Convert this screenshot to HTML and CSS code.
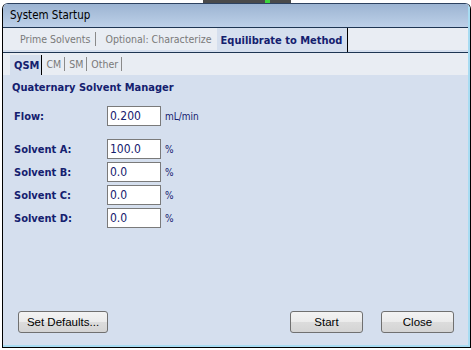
FILE: index.html
```html
<!DOCTYPE html>
<html lang="en">
<head>
    <meta charset="UTF-8">
    <title>System Startup</title>
    <link rel="stylesheet" href="styles.css">
</head>
<body>
    <div class="topstrip">
        <div class="topstrip__bar"><span class="topstrip__dot"></span></div>
    </div>
    <div class="window">
        <div class="window__inner">
            <div class="window__title">System Startup</div>

            <div class="tabs tabs--steps">
                <span class="tab tab--first">Prime Solvents</span>
                <span class="tabs__sep"></span>
                <span class="tab">Optional: Characterize</span>
                <span class="tab tab--active">Equilibrate to Method</span>
            </div>

            <div class="tabs tabs--modules">
                <span class="tab tab--active">QSM</span>
                <span class="tab">CM</span>
                <span class="tabs__sep"></span>
                <span class="tab">SM</span>
                <span class="tabs__sep"></span>
                <span class="tab">Other</span>
                <span class="tabs__sep"></span>
            </div>

            <div class="panel">
                <div class="panel__heading">Quaternary Solvent Manager</div>

                <div class="field field--flow">
                    <label class="field__label" for="flow">Flow:</label>
                    <input class="field__input" id="flow" type="text" value="0.200">
                    <span class="field__unit">mL/min</span>
                </div>

                <div class="field-group">
                    <div class="field">
                        <label class="field__label" for="solventA">Solvent A:</label>
                        <input class="field__input" id="solventA" type="text" value="100.0">
                        <span class="field__unit">%</span>
                    </div>
                    <div class="field">
                        <label class="field__label" for="solventB">Solvent B:</label>
                        <input class="field__input" id="solventB" type="text" value="0.0">
                        <span class="field__unit">%</span>
                    </div>
                    <div class="field">
                        <label class="field__label" for="solventC">Solvent C:</label>
                        <input class="field__input" id="solventC" type="text" value="0.0">
                        <span class="field__unit">%</span>
                    </div>
                    <div class="field">
                        <label class="field__label" for="solventD">Solvent D:</label>
                        <input class="field__input" id="solventD" type="text" value="0.0">
                        <span class="field__unit">%</span>
                    </div>
                </div>
            </div>

            <div class="footer">
                <button class="btn btn--defaults">Set Defaults...</button>
                <div class="footer__right">
                    <button class="btn">Start</button>
                    <button class="btn">Close</button>
                </div>
            </div>
        </div>
    </div>
</body>
</html>
```

FILE: styles.css
```css
/* Global */
html, body {
    margin: 0;
    padding: 0;
    background: #fff;
    font-family: 'DejaVu Sans Condensed', 'DejaVu Sans', sans-serif;
}

.topstrip {
    height: 3px;
}

.topstrip__bar {
    margin-left: 203px;
    width: 88px;
    height: 3px;
    background: #4a4a4a;
}

.topstrip__dot {
    display: block;
    margin-left: 62px;
    width: 5px;
    height: 3px;
    background: #3cd43c;
}

/* Window frame */
.window {
    margin-left: 2px;
    width: 469px;
    height: 345px;
    box-sizing: border-box;
    border: 1px solid #000;
    border-top-color: #2d4260;
    border-radius: 6px 6px 0 0;
    overflow: hidden;
}

.window__inner {
    height: 100%;
    box-sizing: border-box;
    border-right: 2px solid #a8dcf2;
    border-bottom: 2px solid #a8dcf2;
    background: #d5dfee;
    display: flex;
    flex-direction: column;
}

.window__title {
    height: 23px;
    line-height: 23px;
    padding-left: 7px;
    font-size: 11.5px;
    color: #000;
    background: linear-gradient(to bottom, #9cb4d2, #bdd0e8);
    border-bottom: 1px solid #1e3552;
}

/* Tab rows */
.tabs {
    display: flex;
    align-items: stretch;
    background: #e9edf3;
    font-size: 10.5px;
    color: #7a7a7a;
}

.tabs--steps {
    height: 22px;
    border-bottom: 2px solid #d5dfee;
    box-shadow: 0 1px 0 #1e3552;
    margin-bottom: 1px;
}

.tabs--modules {
    height: 22px;
    padding-left: 7px;
}

.tab {
    display: flex;
    align-items: center;
}

.tabs--steps .tab {
    padding: 0 5px;
}

.tabs--steps .tab--first {
    padding-left: 17px;
}

.tabs--modules .tab {
    padding: 0 3px 0 4px;
}

.tab--active {
    background: #d5dfee;
    color: #14206e;
    font-size: 11px;
    font-weight: bold;
    border-right: 1px solid #000;
}

.tabs--steps .tab--active {
    margin-bottom: -2px;
    padding: 0 5px 0 4px;
}

.tabs--modules .tab--active {
    margin-top: 2px;
    padding: 0 2px 0 4px;
}

.tabs__sep {
    width: 1px;
    margin: 4px 0;
    background: #8a8a8a;
}

.tabs--steps .tabs__sep {
    margin-right: 4px;
}

/* Panel */
.panel {
    flex: 1;
    padding: 5px 9px 0;
    color: #14206e;
}

.panel__heading {
    font-size: 11px;
    font-weight: bold;
    line-height: 16px;
    margin-bottom: 10px;
}

.field {
    display: flex;
    align-items: center;
    height: 20px;
    padding-left: 2px;
}

.field--flow {
    margin-bottom: 13px;
}

.field-group {
    display: flex;
    flex-direction: column;
    gap: 3px;
}

.field__label {
    width: 93px;
    font-size: 11px;
    font-weight: bold;
}

.field__input {
    width: 54px;
    height: 20px;
    box-sizing: border-box;
    border: 1px solid #7a7a7a;
    padding: 0 2px;
    margin: 0;
    font-family: 'DejaVu Sans Condensed', 'DejaVu Sans', sans-serif;
    font-size: 12px;
    color: #14206e;
    background: #fff;
    outline: none;
}

.field__unit {
    margin-left: 4px;
    font-size: 10px;
}

/* Footer buttons */
.footer {
    display: flex;
    justify-content: space-between;
    align-items: center;
    padding: 0 14px 12px 15px;
}

.footer__right {
    display: flex;
    gap: 18px;
}

.btn {
    width: 73px;
    height: 22px;
    padding: 0;
    border: 1px solid #707070;
    border-radius: 3px;
    background: linear-gradient(to bottom, #f3f3f3 0%, #ebebeb 50%, #dcdcdc 51%, #d4d4d4 100%);
    font-family: 'Liberation Sans', Arial, sans-serif;
    font-size: 11.5px;
    color: #000;
}

.btn--defaults {
    width: 90px;
}
```
